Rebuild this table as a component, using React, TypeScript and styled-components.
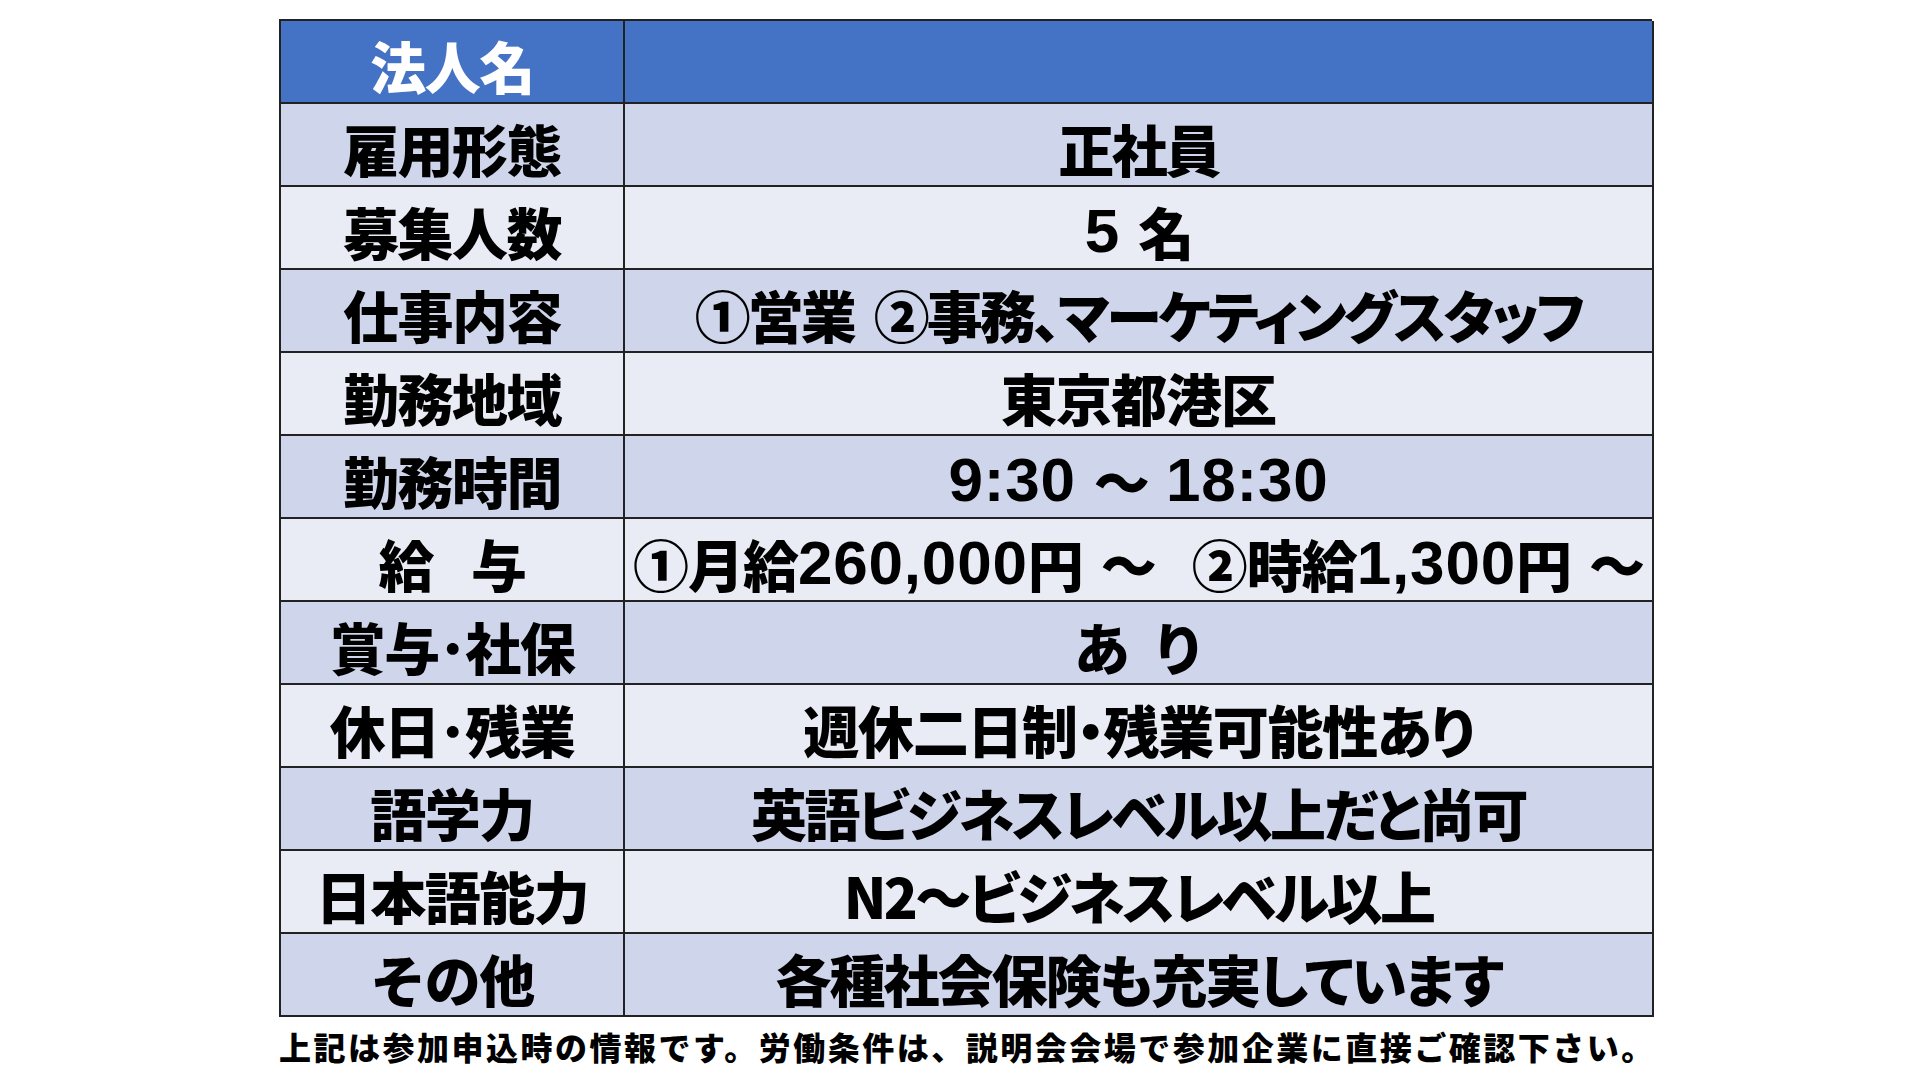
import React from "react";
import styled, { createGlobalStyle } from "styled-components";

const Global = createGlobalStyle`
  html, body { margin: 0; padding: 0; background: #ffffff; }
  body { font-family: "Noto Sans CJK JP", "Noto Sans", sans-serif; }
`;

const Page = styled.div`
  width: 1920px;
  height: 1080px;
  box-sizing: border-box;
  padding: 19px 0 0 279px;
  background: #ffffff;
`;

const Sheet = styled.div`
  display: inline-flex;
  flex-direction: column;
`;

const Grid = styled.div`
  display: grid;
  grid-template-columns: 344px 1029px;
  grid-auto-rows: 83px;
  width: 1373px;
  box-sizing: border-box;
  border-top: 2px solid #222;
  border-left: 2px solid #222;
`;

type Tone = "head" | "dark" | "light";

const bg = (t: Tone) => (t === "head" ? "#4472C4" : t === "dark" ? "#CFD5EA" : "#E9EBF5");

const Cell = styled.div<{ $tone: Tone }>`
  box-sizing: border-box;
  border-right: 2px solid #222;
  border-bottom: 2px solid #222;
  background: ${(p) => bg(p.$tone)};
  color: ${(p) => (p.$tone === "head" ? "#ffffff" : "#000000")};
  display: flex;
  align-items: center;
  justify-content: center;
  padding-top: 6px;
  white-space: pre;
  font-family: "Noto Sans CJK JP", sans-serif;
  font-weight: 900;
`;

const Label = styled(Cell)`
  font-size: 56px;
  letter-spacing: -1.5px;
`;

const Value = styled(Cell)<{ $ls?: number; $plain?: boolean }>`
  font-size: 56px;
  letter-spacing: ${(p) => (p.$ls ?? -2)}px;
  font-feature-settings: ${(p) => (p.$plain ? "normal" : '"palt" 1')};
`;

const Num = styled.span`
  font-family: "Liberation Sans", "Noto Sans CJK JP", sans-serif;
  font-weight: 700;
  font-size: 62px;
  letter-spacing: 0.8px;
`;

const Note = styled.div`
  margin-top: 6px;
  font-family: "Noto Sans CJK JP", sans-serif;
  font-weight: 900;
  font-size: 32px;
  letter-spacing: 2.5px;
  line-height: 46px;
  color: #000;
  white-space: nowrap;
`;

type Row = { k: string; v: React.ReactNode; ls?: number; plain?: boolean };

const rows: Row[] = [
  { k: "雇用形態", v: "正社員", ls: -2.5 },
  { k: "募集人数", v: <><Num>5 </Num>名</>, plain: true },
  { k: "仕事内容", v: "①営業  ②事務、マーケティングスタッフ", ls: -2.9 },
  { k: "勤務地域", v: "東京都港区", ls: -1 },
  { k: "勤務時間", v: <><Num>9:30 </Num>～<Num> 18:30</Num></>, plain: true },
  {
    k: "給\u2002 与",
    v: (
      <>
        ①月給<Num>260,000</Num>円<Num> </Num>～<Num>  </Num>②時給<Num>1,300</Num>円<Num> </Num>～
      </>
    ),
    ls: -1,
    plain: true,
  },
  { k: "賞与･社保", v: "あ\u2002り", plain: true, ls: -3.6 },
  { k: "休日･残業", v: "週休二日制・残業可能性あり", ls: -1.3 },
  { k: "語学力", v: "英語ビジネスレベル以上だと尚可", ls: -2.5 },
  { k: "日本語能力", v: "N2～ビジネスレベル以上", ls: -2.6 },
  { k: "その他", v: "各種社会保険も充実しています" },
];

export default function App() {
  return (
    <>
      <Global />
      <Page>
        <Sheet>
          <Grid>
            <Label $tone="head">法人名</Label>
            <Value $tone="head"></Value>
            {rows.map((r, i) => {
              const tone: Tone = i % 2 === 0 ? "dark" : "light";
              return (
                <React.Fragment key={r.k}>
                  <Label $tone={tone}>{r.k}</Label>
                  <Value $tone={tone} $ls={r.ls} $plain={r.plain}>{r.v}</Value>
                </React.Fragment>
              );
            })}
          </Grid>
          <Note>上記は参加申込時の情報です。労働条件は、説明会会場で参加企業に直接ご確認下さい。</Note>
        </Sheet>
      </Page>
    </>
  );
}
